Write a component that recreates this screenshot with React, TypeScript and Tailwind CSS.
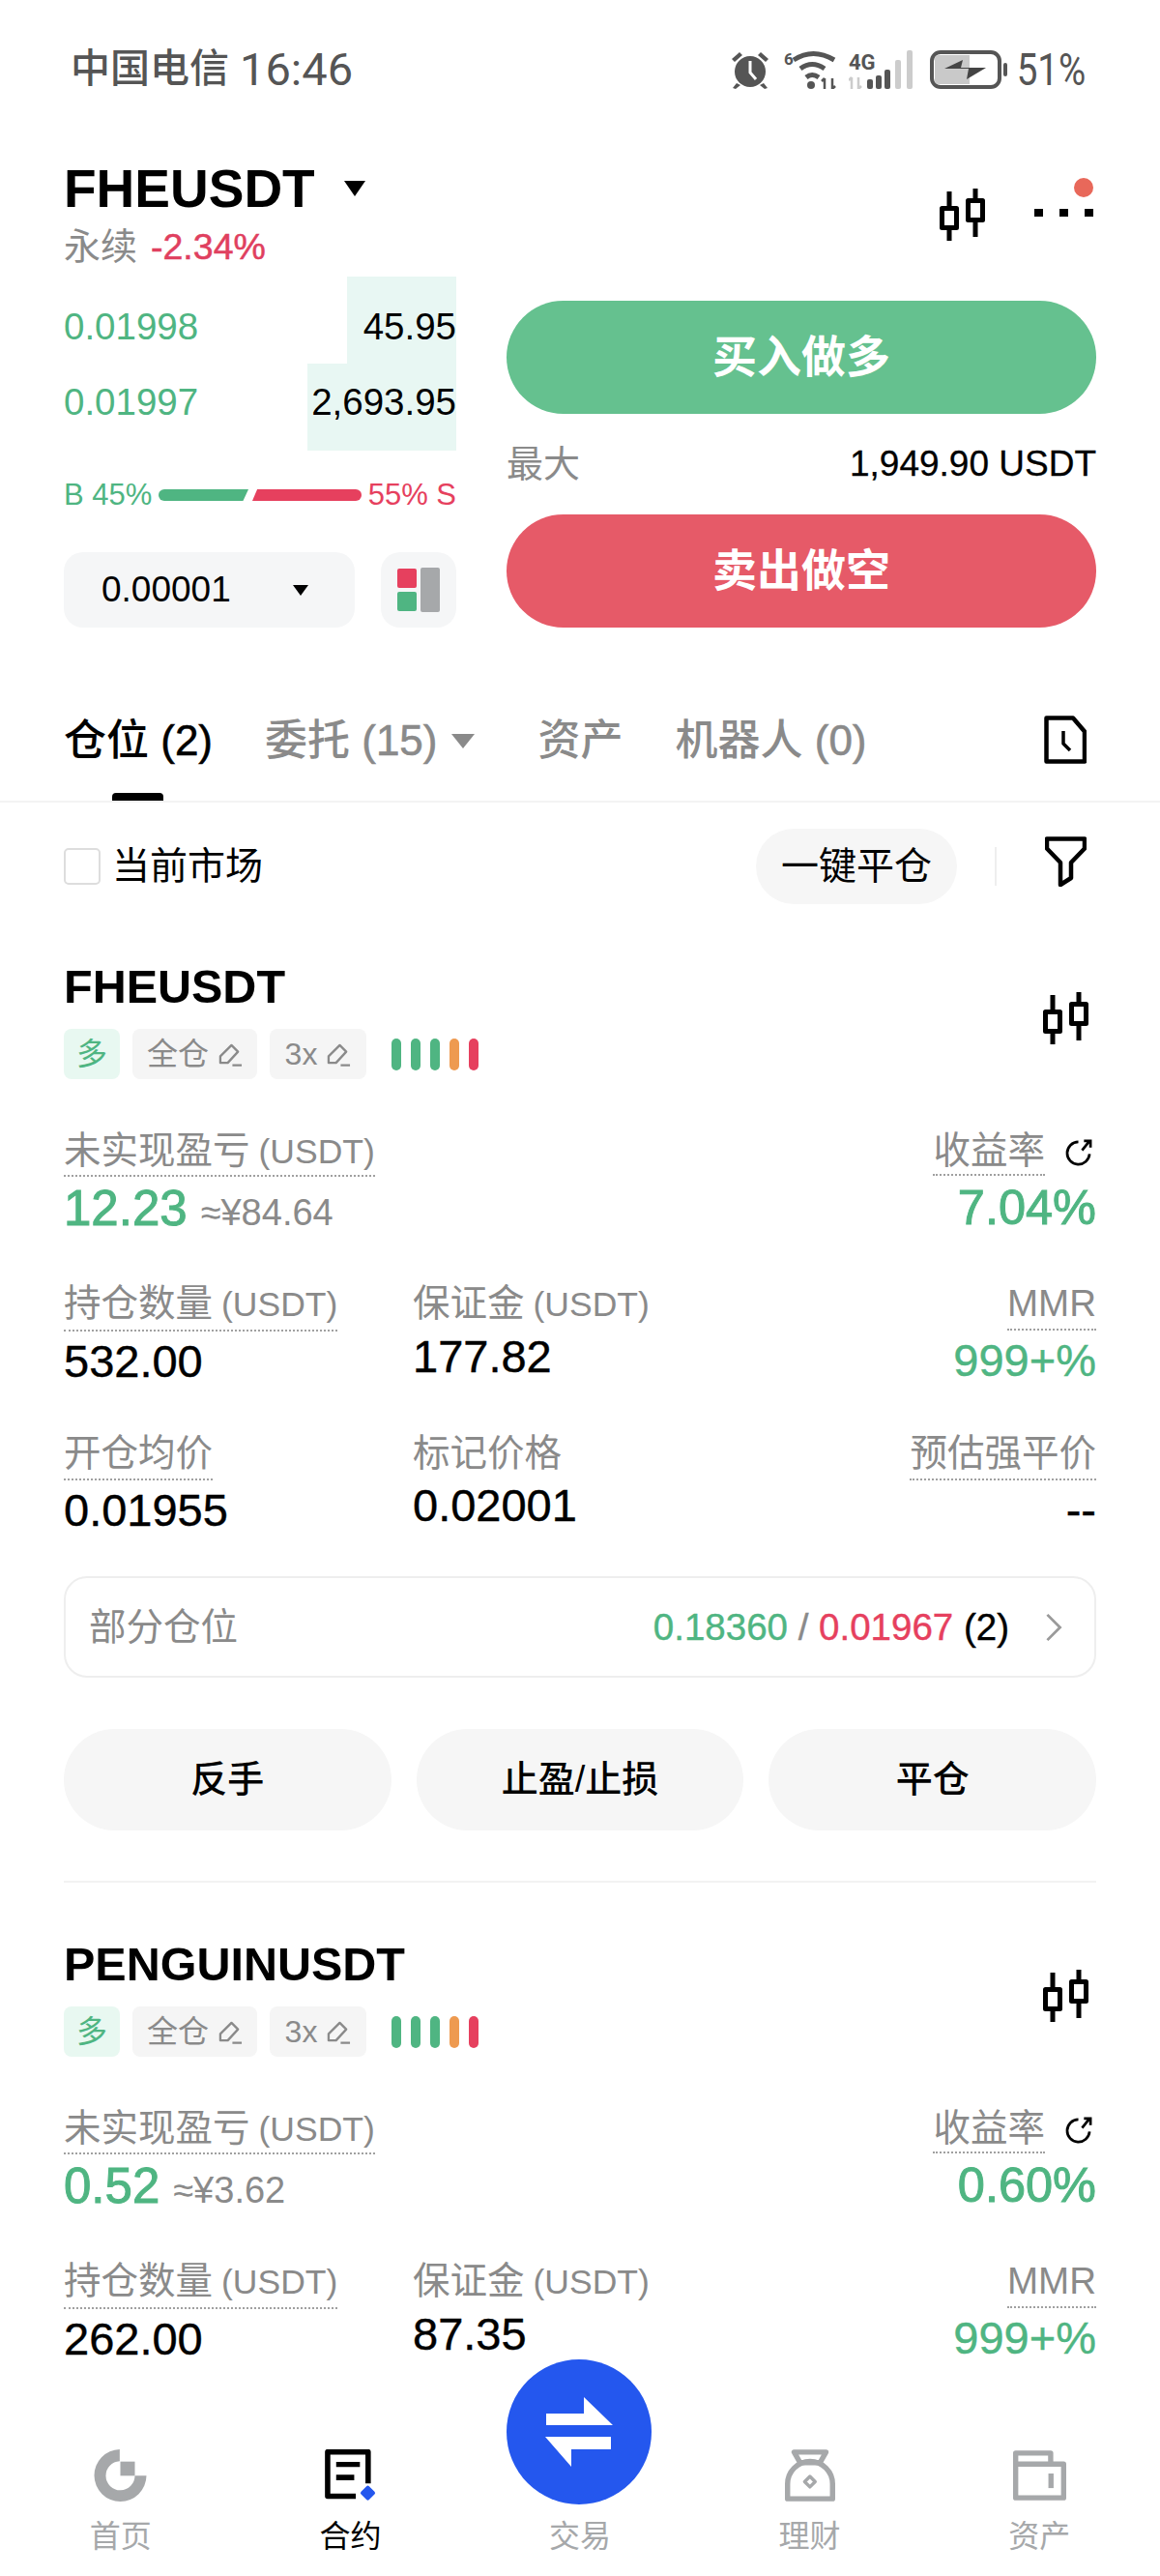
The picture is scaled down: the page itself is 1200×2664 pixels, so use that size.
import type { ReactNode } from "react";

const Candle = ({ className }: { className: string }) => (
  <svg viewBox="0 0 50 54" className={className} fill="none" stroke="#000" strokeWidth="5" strokeLinejoin="round">
    <path d="M11 3v51M38 0v50" />
    <rect x="3.500" y="20.500" width="15" height="20" fill="#fff" />
    <rect x="30.500" y="12.500" width="15" height="20" fill="#fff" />
  </svg>
);

const Pencil = () => (
  <svg viewBox="0 0 26 26" className="h-[25px] w-[25px]" fill="none" stroke="#8a8a8a" strokeWidth="2.400" strokeLinejoin="round">
    <path d="M2 15 14 3l7 7-11 12H2zM15 24.500h10" />
  </svg>
);

// the latin unit in a label is set a little smaller than the chinese
const Label = ({ text }: { text: string }) => {
  const [main, unit] = text.split(" ");
  return (
    <>
      {main}
      {unit && <span className="ml-[9px] text-[35.5px]">{unit}</span>}
    </>
  );
};

const Dotted = ({ text, tight }: { text: string; tight?: boolean }) => (
  <span className={`block border-b-2 border-dotted border-[#a0a0a0] leading-[46px] ${tight ? "pb-[1px]" : "pb-[3px]"}`}>
    <Label text={text} />
  </span>
);

const Tag = ({ children, className }: { children: ReactNode; className: string }) => (
  <div className={`flex h-[52px] items-center justify-center gap-[10px] rounded-[8px] text-[32px] ${className}`}>
    {children}
  </div>
);

const Stat = ({ label, value, green, right, dotted = true }: { label: string; value: string; green?: boolean; right?: boolean; dotted?: boolean }) => (
  <div className={right ? "text-right" : ""}>
    <div className={`flex text-[38.5px] text-[#8a8a8a] ${right ? "justify-end" : ""}`}>
      {dotted ? (
        <Dotted text={label} />
      ) : (
        <span className="block leading-[46px]">
          <Label text={label} />
        </span>
      )}
    </div>
    <div className={`mt-[5px] text-[47px] leading-[52px] [-webkit-text-stroke:0.4px] ${green ? "text-[#4fb582]" : "text-black"}`}>{value}</div>
  </div>
);

type Position = {
  name: string;
  pnl: string;
  cny: string;
  roe: string;
  size: string;
  margin: string;
  // the lower half of a card is left out where the nav bar covers it
  lower?: { entry: string; mark: string; split: [string, string] };
};

const Card = ({ p }: { p: Position }) => (
  <section className="px-[66px]">
    <div className="flex items-start justify-between">
      <div>
        <h2 className="text-[48.5px] font-bold leading-[56px] text-black">{p.name}</h2>
        <div className="mt-[16px] flex items-center gap-[13px]">
          <Tag className="w-[58px] bg-[#e8f8f1] text-[#4fb582]">多</Tag>
          <Tag className="w-[129px] bg-[#f5f5f5] text-[#8a8a8a]">全仓<Pencil /></Tag>
          <Tag className="w-[100px] bg-[#f5f5f5] text-[#8a8a8a]">3x<Pencil /></Tag>
          <div className="ml-[13px] flex gap-[10px]">
            {["bg-[#4fb582]", "bg-[#4fb582]", "bg-[#4fb582]", "bg-[#ee9a50]", "bg-[#e6405e]"].map((c, i) => (
              <span key={i} className={`h-[33px] w-[10px] rounded-full ${c}`} />
            ))}
          </div>
        </div>
      </div>
      <Candle className="mt-[34px] mr-[6px] h-[54px] w-[50px]" />
    </div>

    <div className="mt-[51px] flex items-start justify-between">
      <div>
        <div className="flex text-[38.5px] text-[#8a8a8a]"><Dotted text="未实现盈亏 (USDT)" tight /></div>
        <div className="mt-[3px] flex items-baseline gap-[14px] leading-[60px]">
          <span className="text-[51px] text-[#4fb582] [-webkit-text-stroke:1px]">{p.pnl}</span>
          <span className="text-[38px] text-[#8a8a8a]">{p.cny}</span>
        </div>
      </div>
      <div className="text-right">
        <div className="flex items-start justify-end gap-[21px] pr-[3px] text-[38.5px] text-[#8a8a8a]">
          <Dotted text="收益率" tight />
          <svg viewBox="0 0 30 30" className="mt-[10px] h-[29px] w-[29px]" fill="none" stroke="#000" strokeWidth="2.800">
            <path d="M14 4A12 12 0 1 0 26 17M18 13l8-10M20 3h7v7" />
          </svg>
        </div>
        <div className="mt-[3px] text-[50.5px] leading-[60px] text-[#4fb582] [-webkit-text-stroke:1px]">{p.roe}</div>
      </div>
    </div>

    <div className="mt-[41px] grid grid-cols-[361px_1fr_auto] items-start">
      <Stat label="持仓数量 (USDT)" value={p.size} />
      <Stat label="保证金 (USDT)" value={p.margin} dotted={false} />
      <Stat label="MMR" value="999+%" green right />
    </div>

    {p.lower && (
      <>
        <div className="mt-[46px] grid grid-cols-[361px_1fr_auto] items-start">
          <Stat label="开仓均价" value={p.lower.entry} />
          <Stat label="标记价格" value={p.lower.mark} dotted={false} />
          <Stat label="预估强平价" value="--" right />
        </div>

        <div className="mt-[42px] flex h-[105px] items-center justify-between rounded-[24px] border-2 border-[#eeeeee] pr-[32px] pl-[24px]">
          <span className="text-[38.5px] text-[#8a8a8a]">部分仓位</span>
          <div className="flex items-center gap-[36px] text-[38.5px] [-webkit-text-stroke:0.4px]">
            <span>
              <span className="text-[#4fb582]">{p.lower.split[0]}</span>
              <span className="text-[#8a8a8a]"> / </span>
              <span className="text-[#e6405e]">{p.lower.split[1]}</span>
              <span className="text-black"> (2)</span>
            </span>
            <svg viewBox="0 0 20 32" className="h-[30px] w-[20px]" fill="none" stroke="#9a9a9a" strokeWidth="3">
              <path d="m3 2 14 14L3 30" />
            </svg>
          </div>
        </div>

        <div className="mt-[53px] grid grid-cols-3 gap-[26px]">
          {["反手", "止盈/止损", "平仓"].map((t) => (
            <div key={t} className="flex h-[105px] items-center justify-center rounded-full bg-[#f6f6f6] text-[38px] font-medium text-black">{t}</div>
          ))}
        </div>
        <div className="mt-[52px] h-[2px] bg-[#f2f2f2]" />
      </>
    )}
  </section>
);

const positions: Position[] = [
  {
    name: "FHEUSDT",
    pnl: "12.23",
    cny: "≈¥84.64",
    roe: "7.04%",
    size: "532.00",
    margin: "177.82",
    lower: { entry: "0.01955", mark: "0.02001", split: ["0.18360", "0.01967"] },
  },
  { name: "PENGUINUSDT", pnl: "0.52", cny: "≈¥3.62", roe: "0.60%", size: "262.00", margin: "87.35" },
];

const navItems = ["首页", "合约", "交易", "理财", "资产"];

const NavIcon = ({ i }: { i: number }) => {
  if (i === 0)
    return (
      <svg viewBox="0 0 164 162" className="h-[54px] w-[55px]" fill="#a6a8aa">
        <path d="M80 0A81 81 0 1 0 163 82H127A45 45 0 1 1 80 37z" />
        <rect x="82" y="38" width="45" height="44" />
      </svg>
    );
  if (i === 1)
    return (
      <svg viewBox="0 0 160 165" className="h-[54px] w-[53px]">
        <path d="M136 108V8H8v140h89" fill="none" stroke="#000" strokeWidth="17" strokeLinejoin="round" />
        <path d="M35 40h75v16H35zM35 80h57v18H35z" fill="#000" />
        <rect x="117" y="120" width="36" height="36" rx="6" transform="rotate(45 135 138)" fill="#2457ee" />
      </svg>
    );
  if (i === 2) return <div className="h-[54px] w-[56px]" />;
  if (i === 3)
    return (
      <svg viewBox="0 0 153 158" className="h-[54px] w-[52px]" fill="none" stroke="#a6a8aa" strokeWidth="16" strokeLinejoin="round">
        <path d="M28 8h97l-18 32H46z" />
        <path d="M8 150v-45a68 68 0 0 1 137 0v45z" />
        <path d="m76 82 16 16-16 16-16-16z" strokeWidth="10" />
      </svg>
    );
  return (
    <svg viewBox="0 0 164 154" className="h-[54px] w-[55px]" fill="none" stroke="#a6a8aa" strokeWidth="16" strokeLinejoin="round">
      <path d="M8 146V8h108v34h40v104zM8 42h108" />
      <path d="M117 71v45" />
    </svg>
  );
};

export default function App() {
  return (
    <div className="relative flex h-[2664px] w-[1200px] flex-col bg-white font-['Liberation_Sans','Noto_Sans_CJK_SC',sans-serif]">
      <main className="h-[2470px]">
        {/* status bar */}
        <div className="flex h-[144px] items-center justify-between pr-[77px] pl-[73px] font-['Roboto','Noto_Sans_CJK_SC',sans-serif] text-[#555]">
          <div className="flex items-center gap-[11px]">
            <span className="text-[41px] font-medium">中国电信</span>
            <span className="text-[47px]">16:46</span>
          </div>
          <div className="flex items-center">
            <svg viewBox="0 0 40 40" className="h-[40px] w-[40px]" fill="#555">
              <circle cx="20" cy="22" r="16" />
              <path d="M1 9 9 2l3 3-8 7zM39 9l-8-7-3 3 8 7zM6 34l-4 5 3 1 5-4zM34 34l4 5-3 1-5-4z" />
              <path d="M20 11v12l6 7" stroke="#fff" strokeWidth="3" fill="none" />
            </svg>
            <svg viewBox="0 0 56 40" className="ml-[15px] h-[40px] w-[56px]" fill="none" stroke="#555" strokeWidth="5">
              <text x="0" y="15" fontSize="17" fontWeight="700" fill="#555" stroke="none">6</text>
              <path d="M10 10Q30 -3 52 10M17 19Q29 10 42 19M23 28Q29 23 36 28" />
              <circle cx="28" cy="36" r="4" fill="#555" stroke="none" />
              <path d="M42 40V29M39 32l3-3M50 29v11M53 37l-3 3" strokeWidth="2.500" />
            </svg>
            <svg viewBox="0 0 67 40" className="ml-[11px] h-[40px] w-[67px]" fill="#555">
              <text x="0" y="20" fontSize="22" fontWeight="700">4G</text>
              <path d="M3 40V28M0 31l3-3M10 28v12M13 37l-3 3" stroke="#ccc" strokeWidth="2.500" fill="none" />
              <rect x="19" y="30" width="6" height="10" rx="2" />
              <rect x="28" y="26" width="6" height="14" rx="2" />
              <rect x="37" y="20" width="6" height="20" rx="2" />
              <rect x="48" y="10" width="6" height="30" rx="2" fill="#ccc" />
              <rect x="60" y="0" width="6" height="40" rx="2" fill="#ccc" />
            </svg>
            <svg viewBox="0 0 80 40" className="ml-[17px] h-[40px] w-[80px]">
              <rect x="2" y="2" width="70" height="36" rx="9" fill="#fff" stroke="#555" strokeWidth="4" />
              <path d="M5 9a4 4 0 0 1 4-4h32v30H9a4 4 0 0 1-4-4z" fill="#c9c9c9" />
              <path d="M15 19 34 10l-2 8h26L38 30l2-11z" fill="#444" />
              <rect x="76" y="13" width="4" height="14" rx="2" fill="#555" />
            </svg>
            <span className="-ml-[6px] origin-right scale-x-[0.82] text-[47px]">51%</span>
          </div>
        </div>

        {/* symbol header */}
        <div className="flex items-start justify-between px-[66px] pt-[18px]">
          <div>
            <div className="flex items-center">
              <h1 className="text-[55px] font-bold leading-[66px] text-black">FHEUSDT</h1>
              <span className="ml-[30px] h-0 w-0 border-x-[11px] border-t-[16px] border-x-transparent border-t-black" />
            </div>
            <div className="mt-[4px] flex gap-[14px] text-[38px] leading-[46px]">
              <span className="text-[#8a8a8a]">永续</span>
              <span className="text-[37.5px] text-[#e0405f] [-webkit-text-stroke:0.5px]">-2.34%</span>
            </div>
          </div>
          <div className="relative flex items-center pt-[33px] pr-[3px]">
            <Candle className="h-[54px] w-[50px]" />
            <div className="-mt-[4px] ml-[49px] flex gap-[17px]">
              <span className="h-[8px] w-[9px] bg-black" />
              <span className="h-[8px] w-[9px] bg-black" />
              <span className="h-[8px] w-[9px] bg-black" />
            </div>
            <span className="absolute top-[22px] right-[3px] h-[20px] w-[20px] rounded-full bg-[#e8685a]" />
          </div>
        </div>

        {/* order book and buttons */}
        <div className="mt-[8px] flex gap-[52px] px-[66px]">
          <div className="w-[406px]">
            {[
              ["0.01998", "45.95", "w-[113px]", "pt-[14px]"],
              ["0.01997", "2,693.95", "w-[154px]", "pb-[10px]"],
            ].map(([price, amount, depth, nudge]) => (
              <div key={price} className={`relative flex h-[90px] items-center justify-between text-[38.5px] ${nudge}`}>
                <span className={`absolute top-0 right-0 bottom-0 bg-[#e8f7f3] ${depth}`} />
                <span className="relative text-[#4fb582]">{price}</span>
                <span className="relative text-black">{amount}</span>
              </div>
            ))}
            <div className="mt-[24px] flex h-[44px] items-center justify-between text-[31px]">
              <span className="text-[#4fb582]">B 45%</span>
              <div className="flex gap-[4px]">
                <span className="h-[12px] w-[93px] rounded-l-full bg-[#4fb582] [clip-path:polygon(0_0,100%_0,94%_100%,0_100%)]" />
                <span className="h-[12px] w-[113px] rounded-r-full bg-[#e6405e] [clip-path:polygon(4.5%_0,100%_0,100%_100%,0_100%)]" />
              </div>
              <span className="text-[#e6405e]">55% S</span>
            </div>
            <div className="mt-[37px] flex justify-between">
              <div className="flex h-[78px] w-[301px] items-center justify-between rounded-[20px] bg-[#f5f6f7] pr-[48px] pl-[39px] text-[37px] text-black">
                0.00001
                <span className="h-0 w-0 border-x-[8px] border-t-[11px] border-x-transparent border-t-black" />
              </div>
              <div className="flex h-[78px] w-[78px] items-center justify-center gap-[4px] rounded-[20px] bg-[#f5f6f7]">
                <div className="flex flex-col gap-[4px]">
                  <span className="block h-[20px] w-[20px] rounded-[2px] bg-[#e6405e]" />
                  <span className="block h-[20px] w-[20px] rounded-[2px] bg-[#4fb582]" />
                </div>
                <span className="h-[46px] w-[20px] rounded-[2px] bg-[#a6a8aa]" />
              </div>
            </div>
          </div>

          <div className="flex-1 pt-[25px]">
            <div className="flex h-[117px] items-center justify-center rounded-full bg-[#65c18f] text-[46px] font-bold text-white">买入做多</div>
            <div className="flex h-[104px] items-center justify-between">
              <span className="text-[38px] text-[#8a8a8a]">最大</span>
              <span className="text-[37px] text-black [-webkit-text-stroke:0.3px]">1,949.90 USDT</span>
            </div>
            <div className="flex h-[117px] items-center justify-center rounded-full bg-[#e65a68] text-[46px] font-bold text-white">卖出做空</div>
          </div>
        </div>

        {/* tabs */}
        <div className="relative mt-[71px] flex h-[110px] items-start border-b-2 border-[#f3f3f3] px-[66px] pt-[20px] text-[44px] leading-[52px] text-[#8a8a8a]">
          <span className="font-medium text-black">仓位 <span className="[-webkit-text-stroke:0.6px]">(2)</span></span>
          <span className="ml-[54px] font-medium">委托 <span className="[-webkit-text-stroke:0.6px]">(15)</span></span>
          <span className="mt-[19px] ml-[14px] h-0 w-0 border-x-[12px] border-t-[15px] border-x-transparent border-t-[#8a8a8a]" />
          <span className="ml-[66px] font-medium">资产</span>
          <span className="ml-[54px] font-medium">机器人 <span className="[-webkit-text-stroke:0.6px]">(0)</span></span>
          <svg viewBox="0 0 44 50" className="mr-[10px] ml-auto h-[50px] w-[44px]" fill="none" stroke="#000" strokeWidth="4.500" strokeLinejoin="round">
            <path d="M2.500 2.500H30l12 14v31H2.500z" />
            <path d="M20 16v13l7 7" strokeWidth="3.500" />
          </svg>
          <span className="absolute bottom-0 left-[116px] h-[8px] w-[53px] rounded-t-[4px] bg-black" />
        </div>

        {/* filter row */}
        <div className="mt-[27px] flex h-[78px] items-center justify-between px-[66px]">
          <div className="flex items-center gap-[12px] text-[39px] text-black">
            <span className="h-[38px] w-[38px] rounded-[5px] border-2 border-[#dddddd]" />
            当前市场
          </div>
          <div className="flex items-center">
            <div className="flex h-[78px] w-[208px] items-center justify-center rounded-full bg-[#f6f6f6] text-[39px] text-black">一键平仓</div>
            <span className="ml-[39px] h-[40px] w-[2px] bg-[#eeeeee]" />
            <svg viewBox="0 0 43 52" className="-mt-[11px] mr-[10px] ml-[50px] h-[52px] w-[43px]" fill="none" stroke="#000" strokeWidth="4.500" strokeLinejoin="round">
              <path d="M2 2.500h39v10L27 27v16l-11 7V27L2 12.500z" />
            </svg>
          </div>
        </div>

        <div className="mt-[57px] flex flex-col gap-[56px]">
          {positions.map((p) => (
            <Card key={p.name} p={p} />
          ))}
        </div>
      </main>

      {/* bottom nav */}
      <nav className="relative grid flex-1 grid-cols-5 bg-white px-[6px] pt-[63px]">
        {navItems.map((t, i) => (
          <div key={t} className={`flex flex-col items-center gap-[16px] text-[32px] leading-[40px] ${i === 1 ? "text-black" : "text-[#a6a8aa]"}`}>
            <NavIcon i={i} />
            {t}
          </div>
        ))}
        <div className="absolute top-[-30px] left-[524px] flex h-[150px] w-[150px] items-center justify-center rounded-full bg-[#2457ee]">
          <svg viewBox="0 0 70 72" className="h-[72px] w-[70px]" fill="#fff">
            <path d="M1 17h39V0l30 29H1zM68 41v13H27v18L0 41z" />
          </svg>
        </div>
      </nav>
    </div>
  );
}
